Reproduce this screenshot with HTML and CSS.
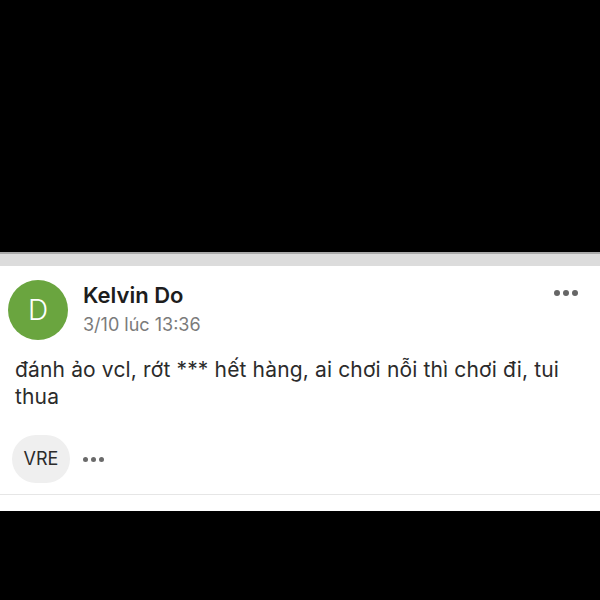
FILE: index.html
```html
<!DOCTYPE html>
<html lang="vi">
<head>
<meta charset="UTF-8">
<title>Kelvin Do</title>
<link rel="stylesheet" href="styles.css">
</head>
<body>
<div class="top"></div>
<div class="post">
  <div class="band"></div>
  <div class="card">
    <div class="head">
      <div class="avatar">D</div>
      <div class="meta">
        <div class="name">Kelvin Do</div>
        <div class="date">3/10 lúc 13:36</div>
      </div>
      <div class="dots more"><span></span><span></span><span></span></div>
    </div>
    <div class="text">đánh ảo vcl, rớt *** hết hàng, ai chơi nỗi thì chơi đi, tui thua</div>
    <div class="foot">
      <div class="tag">VRE</div>
      <div class="dots small"><span></span><span></span><span></span></div>
    </div>
  </div>
  <div class="tail"></div>
</div>
</body>
</html>
```

FILE: styles.css
```css
html, body {
    margin: 0;
    height: 100%;
}
body {
    background: #000;
    font-family: Inter, "Liberation Sans", Arial, sans-serif;
}
.top {
    height: 252px;
}
.post {
    background: #fff;
}
.band {
    height: 12px;
    border-top: 2px solid #a9a9a9;
    background: #dcdcdc;
}
.card {
    padding: 14px 22px 11px 8px;
    border-bottom: 1px solid #e6e6e6;
}
.head {
    display: flex;
    align-items: flex-start;
}
.avatar {
    width: 60px;
    height: 60px;
    border-radius: 50%;
    background: #6aa53f;
    color: #fff;
    font-size: 28px;
    font-weight: 300;
    line-height: 60px;
    text-align: center;
    flex-shrink: 0;
}
.meta {
    flex: 1;
    margin-left: 15px;
    padding-top: 3px;
}
.name {
    font-size: 22px;
    line-height: 24px;
    font-weight: 600;
    color: #1d1d1d;
}
.date {
    margin-top: 8px;
    font-size: 18px;
    line-height: 20px;
    color: #7b7b7b;
}
.dots {
    display: flex;
    gap: 3px;
}
.dots span {
    width: 6px;
    height: 6px;
    border-radius: 50%;
    background: #666;
}
.more {
    margin-top: 10px;
}
.text {
    margin: 16px 0 0 7px;
    font-size: 21px;
    line-height: 27px;
    letter-spacing: 0.15px;
    color: #2b2b2b;
}
.foot {
    display: flex;
    align-items: center;
    margin-top: 25px;
    margin-left: 4px;
}
.tag {
    width: 58px;
    height: 48px;
    border-radius: 24px;
    background: #efefef;
    color: #2b2b2b;
    font-size: 18px;
    line-height: 48px;
    text-align: center;
}
.small {
    margin-left: 13px;
}
.small span {
    width: 5px;
    height: 5px;
    background: #6a6a6a;
}
.tail {
    height: 16px;
}
```
